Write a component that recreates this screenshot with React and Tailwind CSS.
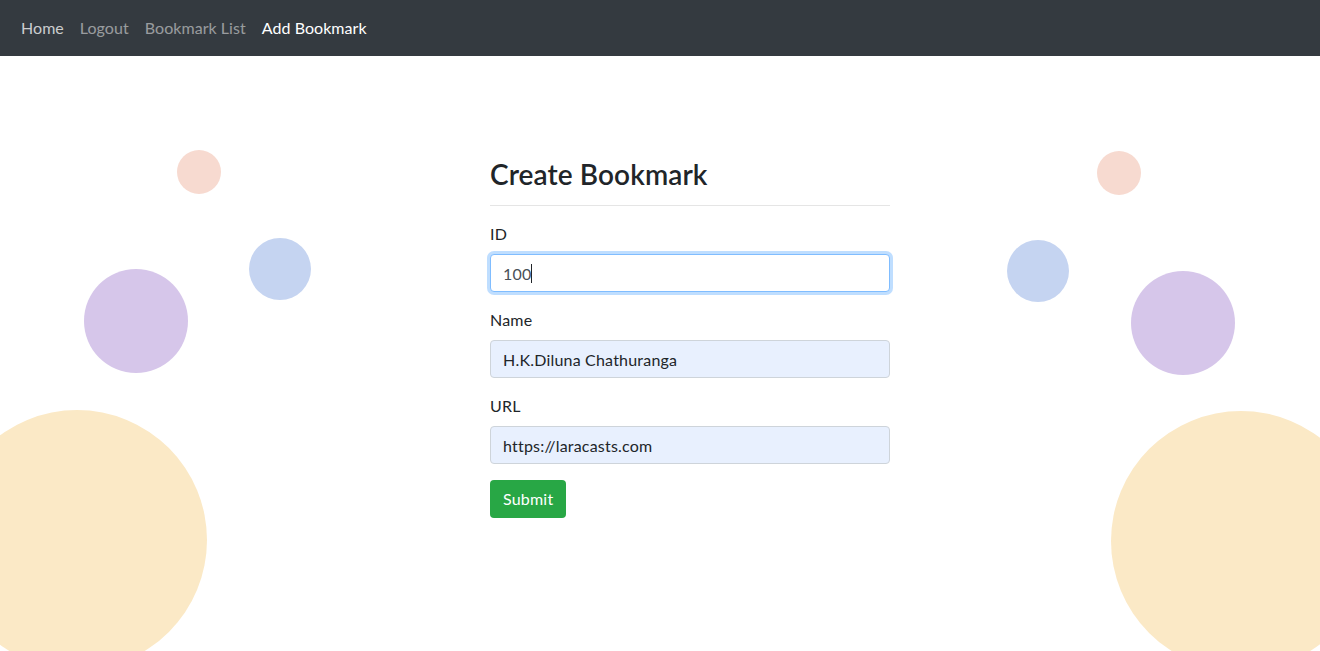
const font = { fontFamily: '"Segoe UI", Lato, "Noto Sans", sans-serif' }

const circles = [
  // left side
  { cls: 'left-[177px] top-[150px] w-[44px] h-[44px] bg-[#f7dad0]' },
  { cls: 'left-[249px] top-[238px] w-[62px] h-[62px] bg-[#c5d4f1]' },
  { cls: 'left-[84px] top-[269px] w-[104px] h-[104px] bg-[#d6c6ea]' },
  { cls: 'left-[-53px] top-[410px] w-[260px] h-[260px] bg-[#fbe9c6]' },
  // right side
  { cls: 'left-[1097px] top-[151px] w-[44px] h-[44px] bg-[#f7dad0]' },
  { cls: 'left-[1007px] top-[240px] w-[62px] h-[62px] bg-[#c5d4f1]' },
  { cls: 'left-[1131px] top-[271px] w-[104px] h-[104px] bg-[#d6c6ea]' },
  { cls: 'left-[1111px] top-[411px] w-[260px] h-[260px] bg-[#fbe9c6]' },
]

const links = [
  { label: 'Home', cls: 'text-white/75' },
  { label: 'Logout', cls: 'text-white/50' },
  { label: 'Bookmark List', cls: 'text-white/50' },
  { label: 'Add Bookmark', cls: 'text-white' },
]

function Field({ label, value, focused }) {
  return (
    <div className="mb-4">
      <label className="block mb-2 text-base leading-6 tracking-[0.2px] text-[#212529]">{label}</label>
      <div className="relative">
        <input
          type="text"
          defaultValue={value}
          className={
            focused
              ? 'w-full h-[38px] px-3 rounded border border-[#80bdff] bg-white text-base tracking-[0.2px] text-[#495057] outline-none shadow-[0_0_0_3px_rgba(0,123,255,0.25)]'
              : 'w-full h-[38px] px-3 rounded border border-[#ced4da] bg-[#e8f0fe] text-base tracking-[0.2px] text-[#212529] outline-none'
          }
          style={font}
        />
        {/* text caret */}
        {focused && (
          <span className="pointer-events-none absolute left-[13px] top-0 h-[38px] flex items-center text-base tracking-[0.2px] text-transparent">
            {value}
            <span className="inline-block w-px h-[19px] bg-[#212529]"></span>
          </span>
        )}
      </div>
    </div>
  )
}

export default function App() {
  return (
    <div className="relative h-screen overflow-hidden bg-white" style={font}>
      {circles.map((c, i) => (
        <div key={i} className={`absolute rounded-full ${c.cls}`}></div>
      ))}

      <nav className="relative z-10 h-14 bg-[#343a40] flex items-center px-[13px]">
        {links.map((l) => (
          <a key={l.label} href="#" className={`px-2 text-base tracking-[0.05px] ${l.cls}`}>
            {l.label}
          </a>
        ))}
      </nav>

      <div className="relative z-10 ml-[490px] w-[400px] pt-[101px]">
        <h3 className="text-[28px] leading-[34px] font-semibold tracking-[0.1px] text-[#212529]">Create Bookmark</h3>
        <hr className="mt-[14px] mb-4 border-0 border-t border-black/10" />

        <form onSubmit={(e) => e.preventDefault()}>
          <Field label="ID" value="100" focused />
          <Field label="Name" value="H.K.Diluna Chathuranga" />
          <Field label="URL" value="https://laracasts.com" />
          <button
            type="submit"
            className="h-[38px] px-[13px] rounded bg-[#28a745] text-white text-base tracking-[0.2px]"
          >
            Submit
          </button>
        </form>
      </div>
    </div>
  )
}
